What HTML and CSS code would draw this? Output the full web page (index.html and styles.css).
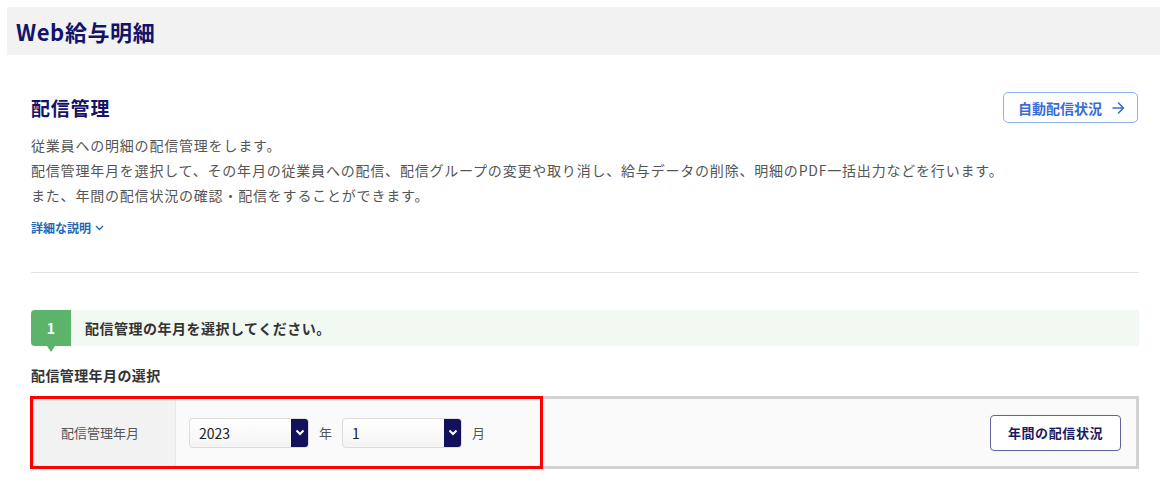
FILE: index.html
```html
<!DOCTYPE html>
<html lang="ja">
<head>
    <meta charset="UTF-8">
    <meta name="viewport" content="width=device-width, initial-scale=1.0">
    <title>Web給与明細 - 配信管理</title>
    <link rel="stylesheet" href="styles.css">
</head>
<body>
    <header class="site-header">
        <h1 class="site-title">Web給与明細</h1>
    </header>

    <main class="main">
        <div class="page-head">
            <h2 class="page-title">配信管理</h2>
            <a href="#" class="btn-auto">自動配信状況
                <svg class="btn-auto-arrow" width="13" height="12" viewBox="0 0 13 12"><path d="M1 6h10.5M6.5 1l5 5-5 5" fill="none" stroke="currentColor" stroke-width="1.6" stroke-linecap="round" stroke-linejoin="round"/></svg>
            </a>
        </div>

        <p class="lead">
            従業員への明細の配信管理をします。<br>
            配信管理年月を選択して、その年月の従業員への配信、配信グループの変更や取り消し、給与データの削除、明細のPDF一括出力などを行います。<br>
            また、年間の配信状況の確認・配信をすることができます。
        </p>

        <a href="#" class="more-link">詳細な説明
            <svg width="9" height="6" viewBox="0 0 9 6"><path d="M1 1l3.5 3.5L8 1" fill="none" stroke="currentColor" stroke-width="1.3"/></svg>
        </a>

        <hr class="divider">

        <div class="step">
            <span class="step-num">1</span>
            <p class="step-text">配信管理の年月を選択してください。</p>
        </div>

        <h3 class="field-title">配信管理年月の選択</h3>

        <div class="select-box">
            <div class="select-label">配信管理年月</div>
            <div class="select-body">
                <div class="select-fields">
                    <div class="select">
                        <span class="select-value">2023</span>
                        <span class="select-arrow"><svg width="10" height="7" viewBox="0 0 10 7"><path d="M1.5 1.5L5 5l3.5-3.5" fill="none" stroke="#fff" stroke-width="2"/></svg></span>
                    </div>
                    <span class="unit">年</span>
                    <div class="select">
                        <span class="select-value">1</span>
                        <span class="select-arrow"><svg width="10" height="7" viewBox="0 0 10 7"><path d="M1.5 1.5L5 5l3.5-3.5" fill="none" stroke="#fff" stroke-width="2"/></svg></span>
                    </div>
                    <span class="unit">月</span>
                </div>
                <button type="button" class="btn-year">年間の配信状況</button>
            </div>
            <div class="highlight"></div>
        </div>
    </main>
</body>
</html>
```

FILE: styles.css
```css
body {
    margin: 7px 9px 0 7px;
    font-family: "Noto Sans CJK JP", "Noto Sans", sans-serif;
    color: #333;
    background: #fff;
}
.site-header {
    height: 48px;
    background-color: #f2f2f2;
    display: flex;
    align-items: center;
    padding-left: 9px;
}
.site-title {
    margin: 0;
    font-size: 22px;
    font-weight: bold;
    letter-spacing: 0.6px;
    line-height: 1;
    color: #14136a;
}
.main {
    padding: 0 21px 0 24px;
}
.page-head {
    display: flex;
    justify-content: space-between;
    align-items: center;
    margin-top: 37px;
}
.page-title {
    margin: 0;
    font-size: 19px;
    font-weight: bold;
    letter-spacing: 0.8px;
    line-height: 31px;
    color: #14136a;
}
.btn-auto {
    display: flex;
    align-items: center;
    gap: 10px;
    height: 31px;
    box-sizing: border-box;
    padding: 0 12px 0 14px;
    margin-right: 1px;
    border: 1px solid #8fb2ec;
    border-radius: 5px;
    color: #3a6cd6;
    font-size: 14px;
    font-weight: bold;
    text-decoration: none;
}
.lead {
    margin: 10px 0 0;
    font-size: 14px;
    line-height: 25px;
    letter-spacing: 0.8px;
    color: #555;
}
.more-link {
    display: inline-flex;
    align-items: center;
    gap: 4px;
    margin-top: 10px;
    font-size: 12px;
    font-weight: bold;
    line-height: 20px;
    color: #1d67b5;
    text-decoration: none;
}
.divider {
    margin: 34px 0 0;
    border: none;
    border-top: 1px solid #e3e3e3;
}
.step {
    display: flex;
    align-items: center;
    height: 36px;
    margin-top: 37px;
    background-color: #f2f8f2;
}
.step-num {
    position: relative;
    width: 40px;
    height: 36px;
    display: flex;
    align-items: center;
    justify-content: center;
    background-color: #5cb46a;
    border-radius: 4px 0 0 4px;
    color: #fff;
    font-weight: bold;
    font-size: 14px;
}
.step-num::after {
    content: "";
    position: absolute;
    left: 16px;
    bottom: -6px;
    border-left: 4px solid transparent;
    border-right: 4px solid transparent;
    border-top: 6px solid #5cb46a;
}
.step-text {
    margin: 0 0 0 14px;
    font-size: 14px;
    font-weight: bold;
    letter-spacing: 0.5px;
    color: #333;
}
.field-title {
    margin: 19px 0 0;
    font-size: 14px;
    font-weight: bold;
    line-height: 20px;
    letter-spacing: 0.4px;
    color: #333;
}
.select-box {
    position: relative;
    display: flex;
    margin-top: 11px;
    height: 73px;
    box-sizing: border-box;
    border: 3px solid #d2d2d2;
    background-color: #fafafa;
}
.select-label {
    width: 142px;
    box-sizing: border-box;
    padding-left: 27px;
    display: flex;
    align-items: center;
    background-color: #f2f2f2;
    border-right: 1px solid #e6e6e6;
    font-size: 13px;
    color: #555;
}
.select-body {
    flex: 1;
    display: flex;
    align-items: center;
    justify-content: space-between;
    padding: 0 15px 0 13px;
}
.select-fields {
    display: flex;
    align-items: center;
}
.select {
    display: flex;
    width: 120px;
    height: 30px;
    box-sizing: border-box;
    border: 1px solid #dcdcdc;
    border-radius: 4px;
    background: linear-gradient(#fff, #f4f4f4);
    overflow: hidden;
}
.select-value {
    flex: 1;
    padding-left: 9px;
    font-size: 14px;
    line-height: 28px;
    color: #222;
}
.select-arrow {
    width: 17px;
    display: flex;
    align-items: center;
    justify-content: center;
    background-color: #11115c;
}
.unit {
    margin: 0 10px;
    font-size: 13px;
    color: #555;
}
.btn-year {
    width: 131px;
    height: 36px;
    border: 1px solid #6262a0;
    border-radius: 4px;
    background: #fff;
    font-family: inherit;
    font-size: 13px;
    font-weight: bold;
    letter-spacing: 0.6px;
    color: #1c1a5e;
    cursor: pointer;
}
.highlight {
    position: absolute;
    top: -3px;
    left: -4px;
    bottom: -3px;
    width: 513px;
    box-sizing: border-box;
    border: 3px solid #ff0000;
}
```
